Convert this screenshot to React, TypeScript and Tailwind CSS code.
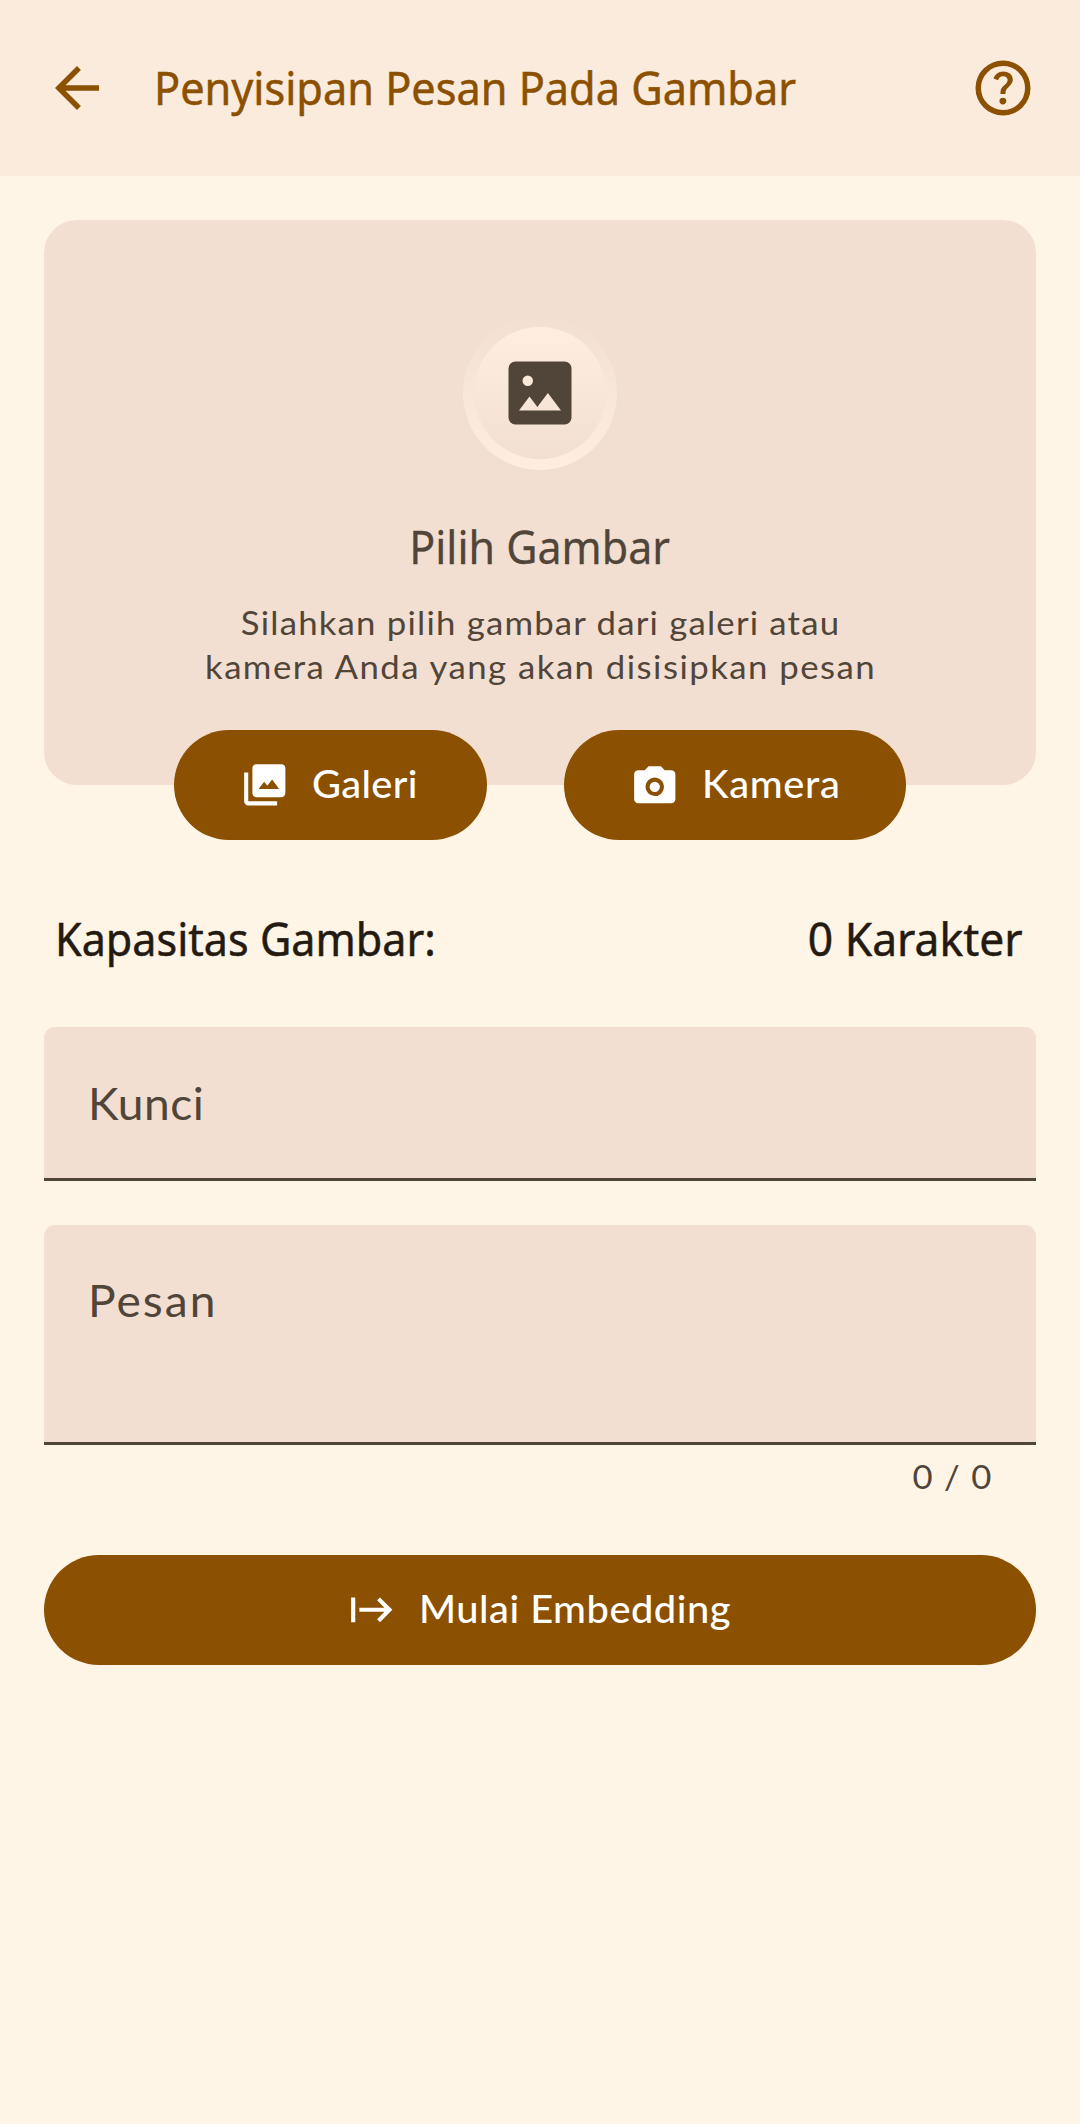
import type { ReactNode } from "react";

type IconProps = { className?: string; children: ReactNode };

function Icon({ className = "size-[49.5px]", children }: IconProps) {
  return (
    <svg viewBox="0 0 24 24" fill="currentColor" className={`${className} shrink-0`} aria-hidden="true">
      {children}
    </svg>
  );
}

function BackIcon() {
  return (
    <Icon className="size-[66px]">
      <path d="M20 11H7.83l5.59-5.59L12 4l-8 8 8 8 1.41-1.41L7.83 13H20v-2z" />
    </Icon>
  );
}

function HelpIcon() {
  return (
    <svg viewBox="0 -960 960 960" fill="currentColor" className="size-[66px] shrink-0" aria-hidden="true">
      <path d="M478-240q21 0 35.5-14.5T528-290q0-21-14.5-35.5T478-340q-21 0-35.5 14.5T428-290q0 21 14.5 35.5T478-240Zm-36-154h74q0-33 7.5-52t42.5-52q26-26 41-49.5t15-56.5q0-56-41-86t-97-30q-57 0-92.5 30T342-618l66 26q5-18 22.5-39t53.5-21q32 0 48 17.5t16 38.5q0 20-12 37.5T506-526q-44 39-54 59t-10 73Zm38 314q-83 0-156-31.5T197-197q-54-54-85.5-127T80-480q0-83 31.5-156T197-763q54-54 127-85.5T480-880q83 0 156 31.5T763-763q54 54 85.5 127T880-480q0 83-31.5 156T763-197q-54 54-127 85.5T480-80Zm0-80q134 0 227-93t93-227q0-134-93-227t-227-93q-134 0-227 93t-93 227q0 134 93 227t227 93Z" />
    </svg>
  );
}

function ImageIcon() {
  return (
    <Icon className="size-[84px]">
      <path
        fillRule="evenodd"
        d="M5 3h14a2 2 0 0 1 2 2v14a2 2 0 0 1-2 2H5a2 2 0 0 1-2-2V5a2 2 0 0 1 2-2zm1 14h12l-3.75-5-3 4L9 13zM8.5 10a1.5 1.5 0 1 0 0-3 1.5 1.5 0 0 0 0 3z"
      />
    </Icon>
  );
}

function GalleryIcon() {
  return (
    <Icon>
      <path
        fillRule="evenodd"
        d="M8 2h12a2 2 0 0 1 2 2v12a2 2 0 0 1-2 2H8a2 2 0 0 1-2-2V4a2 2 0 0 1 2-2zm1 12h10l-3.45-4.5-2.3 3-1.55-2zM2 6h2v14h14v2H4a2 2 0 0 1-2-2z"
      />
    </Icon>
  );
}

function CameraIcon() {
  return (
    <Icon>
      <path
        fillRule="evenodd"
        d="M9 3h6l1.85 2H20a2 2 0 0 1 2 2v12a2 2 0 0 1-2 2H4a2 2 0 0 1-2-2V7a2 2 0 0 1 2-2h3.15zM12 17.5a4.5 4.5 0 1 0 0-9 4.500 4.500 0 0 0 0 9zM12 15.500a2.500 2.500 0 1 1 0-5 2.500 2.500 0 0 1 0 5z"
      />
    </Icon>
  );
}

function StartIcon() {
  return (
    <Icon>
      <path d="M14.59 7.41 18.17 11H6v2h12.17l-3.59 3.59L16 18l6-6-6-6-1.41 1.41zM2 6v12h2V6H2z" />
    </Icon>
  );
}

type ButtonProps = { className: string; icon: ReactNode; label: string; tracking: string };

function PillButton({ className, icon, label, tracking }: ButtonProps) {
  return (
    <button
      type="button"
      className={`flex h-[110px] items-center gap-[22px] rounded-full bg-[#8b5000] text-[37.6px] leading-[52px] font-medium whitespace-nowrap text-white ${className}`}
    >
      {icon}
      <span className={`origin-left scale-x-[1.06] pb-[2px] ${tracking}`}>{label}</span>
    </button>
  );
}

export default function App() {
  return (
    <div className="flex h-[2124px] w-[1080px] flex-col bg-[#fff5e6] font-['Lato',sans-serif] text-[#51453a]">
      <header className="flex h-[176px] shrink-0 items-center bg-[#fbebdd] px-[44px] text-[#8b5000]">
        <BackIcon />
        <h1 className="ml-[43.5px] flex-1 origin-left scale-x-[0.94] pb-[2px] font-['Noto_Sans',sans-serif] text-[46px] leading-[66px] whitespace-nowrap [-webkit-text-stroke:0.5px_currentColor]">
          Penyisipan Pesan Pada Gambar
        </h1>
        <HelpIcon />
      </header>

      <main className="flex flex-col px-[44px] pt-[44px]">
        <section className="flex h-[565px] flex-col items-center rounded-[33px] bg-[#f2dfd1] pt-[96px]">
          <div className="size-[154px] rounded-full bg-linear-to-b from-[#f2dfd1] to-[#ffeee0] p-[11px]">
            <div className="flex size-[132px] items-center justify-center rounded-full bg-linear-to-b from-[#ffeee0] to-[#f2dfd1]">
              <ImageIcon />
            </div>
          </div>
          <h2 className="mt-[43px] scale-x-[0.934] font-['Noto_Sans',sans-serif] text-[46px] leading-[66px] whitespace-nowrap [-webkit-text-stroke:0.3px_currentColor]">
            Pilih Gambar
          </h2>
          <p className="mt-[22px] ml-[2px] flex scale-x-[1.06] flex-col items-center text-[32.8px] leading-[44px] whitespace-nowrap">
            <span className="tracking-[1.13px]">Silahkan pilih gambar dari galeri atau</span>
            <span className="tracking-[1.38px]">kamera Anda yang akan disisipkan pesan</span>
          </p>
        </section>

        <div className="z-10 -mt-[55px] flex justify-center gap-[77px]">
          <PillButton className="w-[313px] pl-[66px]" icon={<GalleryIcon />} label="Galeri" tracking="tracking-[0.3px]" />
          <PillButton className="w-[342px] pl-[66px]" icon={<CameraIcon />} label="Kamera" tracking="tracking-[0.6px]" />
        </div>

        <div className="mt-[65px] flex justify-between px-[11px] font-['Noto_Sans',sans-serif] text-[46px] leading-[66px] whitespace-nowrap text-[#231a11] [-webkit-text-stroke:0.5px_currentColor]">
          <span className="origin-left scale-x-[0.937]">Kapasitas Gambar:</span>
          <span className="mr-[2px] origin-right scale-x-[0.965]">0 Karakter</span>
        </div>

        <div className="mt-[56px] flex h-[154px] items-center rounded-t-[11px] border-b-[3px] border-[#51453a] bg-[#f2dfd1] pl-[44px] text-[43.5px] leading-[60px]">
          <span className="origin-left scale-x-[1.06] tracking-[0.46px]">Kunci</span>
        </div>

        <div className="mt-[44px] flex h-[220px] items-start rounded-t-[11px] border-b-[3px] border-[#51453a] bg-[#f2dfd1] pt-[45px] pl-[44px] text-[43.5px] leading-[60px]">
          <span className="origin-left scale-x-[1.06] tracking-[1.9px]">Pesan</span>
        </div>

        <div className="mt-[10px] flex justify-end pr-[43px] text-[32.8px] leading-[44px]">
          <span className="origin-right scale-x-[1.06] tracking-[1.2px]">0 / 0</span>
        </div>

        <PillButton className="mt-[56px] w-full pl-[303px]" icon={<StartIcon />} label="Mulai Embedding" tracking="tracking-[0.46px]" />
      </main>
    </div>
  );
}
